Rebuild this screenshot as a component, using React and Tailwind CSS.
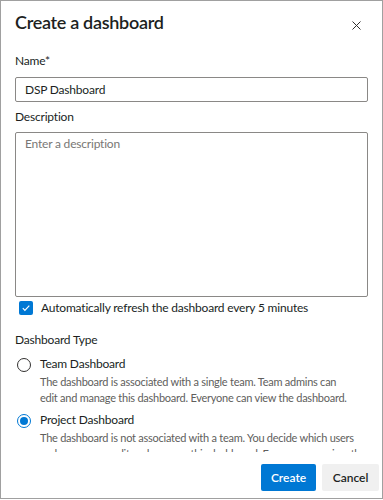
import React from 'react';

const Radio = ({ checked }) => (
  <span
    className={
      'mt-[2px] flex h-[14px] w-[14px] shrink-0 items-center justify-center rounded-full border ' +
      (checked ? 'border-[#0078d4]' : 'border-[#323130]')
    }
  >
    {checked && <span className="h-[8px] w-[8px] rounded-full bg-[#0078d4]" />}
  </span>
);

const TypeOption = ({ checked, title, children }) => (
  <div className="flex gap-[9px] pl-[2px]">
    <Radio checked={checked} />
    <div className="flex flex-col pr-[2px]">
      <span className="text-[12px] leading-[16px] tracking-[-0.2px] text-[#201f1e]">{title}</span>
      <p className="mt-[2px] text-[11px] leading-[16px] tracking-[-0.25px] text-[#605e5c]">{children}</p>
    </div>
  </div>
);

export default function App() {
  return (
    <div className="h-[500px] w-[383px] bg-white font-['Lato',sans-serif] text-[#201f1e]">
      <div className="flex h-[499px] flex-col border border-[#a0a0a0]">
        <header className="flex items-start justify-between pl-[14px] pr-[21px] pt-[9px]">
          <h1 className="text-[18px] font-semibold leading-[24px] tracking-[-0.3px]">Create a dashboard</h1>
          <button className="mt-[11px] text-[#323130]">
            <svg width="9" height="9" viewBox="0 0 9 9" stroke="currentColor" strokeWidth="1">
              <path d="M0.5 0.5l8 8M8.5 0.5l-8 8" />
            </svg>
          </button>
        </header>

        <div className="flex-1 overflow-hidden px-[14px] text-[12px] leading-[16px] tracking-[-0.2px]">
          <label className="mt-[19px] block">Name*</label>
          <input
            className="mt-[8px] block h-[25px] w-full rounded-[2px] border border-[#8a8886] px-[9px] text-[12px] tracking-[-0.2px] text-[#201f1e] outline-none"
            defaultValue="DSP Dashboard"
          />
          <label className="mt-[7px] block">Description</label>
          <textarea
            className="mt-[7px] block h-[165px] w-full resize-none rounded-[2px] border border-[#8a8886] px-[9px] py-[3px] text-[12px] leading-[16px] tracking-[-0.2px] outline-none placeholder:text-[#797775]"
            placeholder="Enter a description"
          />
          <div className="mt-[3px] flex items-center gap-[8px] pl-[4px]">
            <span className="flex h-[14px] w-[14px] items-center justify-center rounded-[2px] bg-[#0078d4]">
              <svg width="10" height="10" viewBox="0 0 10 10" fill="none" stroke="white" strokeWidth="1.2">
                <path d="M1.8 5.2l2.1 2.1 4.4-4.6" />
              </svg>
            </span>
            <span>Automatically refresh the dashboard every 5 minutes</span>
          </div>

          <div className="mt-[16px]">Dashboard Type</div>
          <div className="mt-[8px] flex flex-col gap-[6px]">
            <TypeOption title="Team Dashboard">
              The dashboard is associated with a single team. Team admins can
              <br />
              edit and manage this dashboard. Everyone can view the dashboard.
            </TypeOption>
            <TypeOption checked title="Project Dashboard">
              The dashboard is not associated with a team. You decide which users and groups can edit and manage this dashboard. Everyone can view the dashboard.
            </TypeOption>
          </div>
        </div>

        <footer className="flex justify-end gap-[6px] pb-[7px] pr-[3px] pt-[12px]">
          <button className="h-[27px] w-[55px] rounded-[2px] bg-[#0078d4] text-[12px] font-semibold text-white">
            Create
          </button>
          <button className="h-[27px] w-[57px] rounded-[2px] bg-[#f0f0f0] text-[12px] font-semibold text-[#201f1e]">
            Cancel
          </button>
        </footer>
      </div>
    </div>
  );
}
